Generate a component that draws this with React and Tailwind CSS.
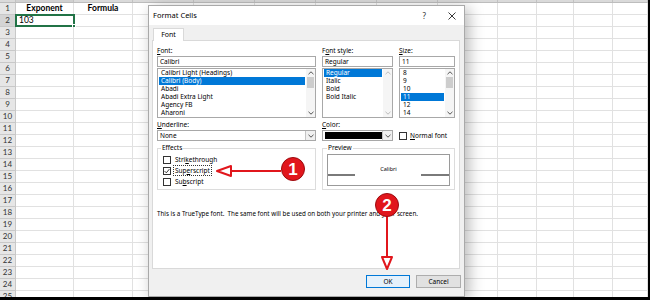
import React from 'react';

const rows = Array.from({ length: 25 }, (_, i) => i + 1);
const cols = 12;

const Chevron = ({ dir = 'down', color = '#555' }) => (
  <svg width="6" height="4" viewBox="0 0 6 4">
    <path
      d={dir === 'down' ? 'M0.5 0.8 L3 3.2 L5.5 0.8' : 'M0.5 3.2 L3 0.8 L5.5 3.2'}
      fill="none"
      stroke={color}
      strokeWidth="1"
    />
  </svg>
);

const Label = ({ pre, key1, post }) => (
  <div className="h-[11px] leading-[11px]">
    {pre}
    <span className="underline">{key1}</span>
    {post}
  </div>
);

const ListBox = ({ items, selected, width, thumb = true }) => (
  <div className={`mt-[1px] h-[50px] border border-[#a8a8a8] bg-white flex ${width}`}>
    <div className="flex-1 flex flex-col pl-[1px] pr-[1px] overflow-hidden">
      {items.map((it) => (
        <div
          key={it}
          className={`h-[8px] leading-[8px] pl-[2px] whitespace-nowrap ${
            it === selected ? 'bg-[#0078d7] text-white' : ''
          }`}
        >
          {it}
        </div>
      ))}
    </div>
    <div className="w-[9px] flex flex-col items-center bg-[#f5f5f5]">
      <div className="h-[8px] flex items-center">
        <Chevron dir="up" color={thumb ? '#555' : '#bbb'} />
      </div>
      {thumb && <div className="w-[7px] h-[11px] bg-[#cdcdcd]" />}
      <div className="mt-auto h-[8px] flex items-center">
        <Chevron color={thumb ? '#555' : '#bbb'} />
      </div>
    </div>
  </div>
);

const Select = ({ children }) => (
  <div className="h-[11px] border border-[#a8a8a8] bg-white flex">
    <div className="flex-1 flex items-center pl-[2px] overflow-hidden">{children}</div>
    <div className="w-[10px] border-l border-[#c4c4c4] flex items-center justify-center bg-[#f0f0f0]">
      <Chevron />
    </div>
  </div>
);

const Check = ({ checked, label, focus }) => (
  <div className="h-[11px] flex items-center pl-[5px]">
    <div className="w-[8px] h-[8px] border border-[#333] bg-white flex items-center justify-center">
      {checked && (
        <svg width="6" height="6" viewBox="0 0 6 6">
          <path d="M0.6 3.1 L2.3 4.8 L5.4 1.1" fill="none" stroke="#222" strokeWidth="0.9" />
        </svg>
      )}
    </div>
    <div className={`ml-[2px] px-[1px] leading-[9px] ${focus ? 'border border-dotted border-[#333]' : 'border border-transparent'}`}>
      {label}
    </div>
  </div>
);

const Sheet = () => (
  <div className="w-[648px] h-[297px] bg-white overflow-hidden flex flex-col font-['Lato',sans-serif]">
    <div className="grid grid-cols-[16px_58px_59px_61px_61px_61px_61px_61px_60px_39px_37px_39px_35px] h-[3px] shrink-0 bg-[#dadada] border-b border-[#bdbdbd]">
      <div className="border-r border-[#c2c2c2]" />
      <div className="border-r border-[#c2c2c2] bg-[#d0d0d0]" />
      {Array.from({ length: cols - 1 }, (_, i) => (
        <div key={i} className="border-r border-[#c2c2c2]" />
      ))}
    </div>
    {rows.map((r) => (
      <div
        key={r}
        className="grid grid-cols-[16px_58px_59px_61px_61px_61px_61px_61px_60px_39px_37px_39px_35px] h-[12px] shrink-0"
      >
        <div
          className={`border-r border-b border-[#c8c8c8] text-center text-[8px] leading-[11px] text-[#333] ${
            r === 2 ? 'bg-[#d4d4d4] text-[#1e6b3f]' : 'bg-[#e6e6e6]'
          }`}
        >
          {r}
        </div>
        <div className="border-r border-b border-[#e1e1e1] text-[8.5px] leading-[11px] text-black relative">
          {r === 1 && <div className="text-center font-bold">Exponent</div>}
          {r === 2 && (
            <div className="absolute -left-[1px] -top-[1px] w-[60px] h-[13px] border-2 border-[#217346] pl-[2px] leading-[9px]">
              103
              <div className="absolute -right-[3px] -bottom-[3px] w-[4px] h-[4px] bg-[#217346] border border-white" />
            </div>
          )}
        </div>
        <div className="border-r border-b border-[#e1e1e1] text-[8.5px] leading-[11px] text-black">
          {r === 1 && <div className="text-center font-bold">Formula</div>}
        </div>
        {Array.from({ length: cols - 2 }, (_, i) => (
          <div key={i} className="border-r border-b border-[#e1e1e1]" />
        ))}
      </div>
    ))}
  </div>
);

const Dialog = () => (
  <div className="absolute left-[148px] top-[5px] w-[317px] h-[292px] bg-[#f0f0f0] border border-[#a9a9a9] shadow-[4px_3px_14px_rgba(0,0,0,0.28)] flex flex-col font-['Noto_Sans',sans-serif] text-[6.5px] text-black">
    {/* Title bar */}
    <div className="h-[19px] bg-white flex items-center pl-[4px] pr-[8px] shrink-0">
      <span className="text-[7.5px]">Format Cells</span>
      <span className="ml-auto text-[8px] text-[#333]">?</span>
      <svg className="ml-[22px]" width="8" height="8" viewBox="0 0 8 8">
        <path d="M0.5 0.5 L7.5 7.5 M7.5 0.5 L0.5 7.5" stroke="#222" strokeWidth="0.9" />
      </svg>
    </div>

    <div className="flex-1 px-[3px] pt-[3px] flex flex-col">
      {/* Tabs */}
      <div className="flex h-[12px] pl-[1px]">
        <div className="w-[31px] bg-white border border-b-0 border-[#d9d9d9] relative z-10 -mb-px flex items-center justify-center text-[7px]">
          Font
        </div>
      </div>

      {/* Panel */}
      <div className="w-[308px] h-[229px] bg-white border border-[#d9d9d9] pl-[4px] pt-[4px] flex flex-col">
        <div className="flex gap-[6px]">
          <div className="w-[159px] flex flex-col">
            <Label key1="F" post="ont:" />
            <div className="h-[11px] border border-[#a8a8a8] pl-[2px] leading-[9px]">Calibri</div>
            <ListBox
              width="w-[159px]"
              selected="Calibri (Body)"
              items={['Calibri Light (Headings)', 'Calibri (Body)', 'Abadi', 'Abadi Extra Light', 'Agency FB', 'Aharoni']}
            />
            <div className="mt-[1px]">
              <Label key1="U" post="nderline:" />
            </div>
            <Select>None</Select>
          </div>

          <div className="w-[71px] flex flex-col">
            <Label pre="F" key1="o" post="nt style:" />
            <div className="h-[11px] border border-[#a8a8a8] pl-[2px] leading-[9px]">Regular</div>
            <ListBox
              width="w-[71px]"
              selected="Regular"
              thumb={false}
              items={['Regular', 'Italic', 'Bold', 'Bold Italic']}
            />
            <div className="mt-[1px]">
              <Label key1="C" post="olor:" />
            </div>
            <Select>
              <div className="w-[57px] h-[7px] bg-black" />
            </Select>
          </div>

          <div className="w-[56px] flex flex-col">
            <Label key1="S" post="ize:" />
            <div className="h-[11px] border border-[#a8a8a8] pl-[2px] leading-[9px]">11</div>
            <ListBox width="w-[56px]" selected="11" items={['8', '9', '10', '11', '12', '14']} />
            <div className="mt-[1px] h-[11px]" />
            <div className="h-[11px] flex items-center">
              <div className="w-[8px] h-[8px] border border-[#333] bg-white" />
              <span className="ml-[3px]">
                <span className="underline">N</span>ormal font
              </span>
            </div>
          </div>
        </div>

        {/* Effects + Preview */}
        <div className="flex gap-[6px] mt-[3px]">
          <fieldset className="w-[159px] h-[46px] border border-[#dcdcdc] px-0">
            <legend className="ml-[3px] px-[1px] leading-[8px]">Effects</legend>
            <div className="mt-[2px]">
              <Check label={<span>Stri<span className="underline">k</span>ethrough</span>} />
              <Check checked focus label={<span>Sup<span className="underline">e</span>rscript</span>} />
              <Check label={<span>Su<span className="underline">b</span>script</span>} />
            </div>
          </fieldset>

          <fieldset className="w-[133px] h-[46px] border border-[#dcdcdc] px-[4px]">
            <legend className="ml-[0px] px-[1px] leading-[8px]">Preview</legend>
            <div className="mt-[2px] h-[32px] border border-[#9a9a9a] flex flex-col">
              <div className="h-[19px] flex items-end justify-center text-[5.5px] leading-[8px] pb-[1px]">
                Calibri
              </div>
              <div className="flex">
                <div className="w-[27px] h-[1.5px] bg-[#7a7a7a]" />
                <div className="flex-1" />
                <div className="w-[28px] h-[1.5px] bg-[#7a7a7a]" />
              </div>
            </div>
          </fieldset>
        </div>

        <div className="mt-[19px] leading-[10px] whitespace-nowrap text-[6.25px]">
          This is a TrueType font.&nbsp; The same font will be used on both your printer and your screen.
        </div>
      </div>

      {/* Buttons */}
      <div className="flex justify-end gap-[6px] mt-[6px]">
        <div className="w-[44px] h-[13px] border border-[#0078d7] bg-[#e5f1fb] flex items-center justify-center text-[6.5px]">
          OK
        </div>
        <div className="w-[45px] h-[13px] border border-[#adadad] bg-[#e1e1e1] flex items-center justify-center text-[6.5px]">
          Cancel
        </div>
      </div>
    </div>
  </div>
);

const Badge = ({ n, className }) => (
  <div
    className={`absolute w-[24px] h-[24px] rounded-full bg-[#e1161c] border border-[#9b0b0f] flex items-center justify-center text-white font-bold text-[17px] leading-none font-['Liberation_Sans',sans-serif] ${className}`}
  >
    {n}
  </div>
);

export default function App() {
  return (
    <div className="w-[650px] h-[300px] bg-black relative overflow-hidden">
      <Sheet />
      <Dialog />

      <svg className="absolute inset-0 pointer-events-none" width="650" height="300" viewBox="0 0 650 300">
        <line x1="281" y1="171" x2="230" y2="171" stroke="#e1161c" strokeWidth="2" />
        <polygon points="217,171 231,166 231,176" fill="#fff" stroke="#e1161c" strokeWidth="2" strokeLinejoin="round" />
        <line x1="387" y1="216" x2="387" y2="257" stroke="#e1161c" strokeWidth="2" />
        <polygon points="387,269 382,257 392,257" fill="#fff" stroke="#e1161c" strokeWidth="2" strokeLinejoin="round" />
      </svg>

      <Badge n="1" className="left-[281px] top-[157px]" />
      <Badge n="2" className="left-[375px] top-[193px]" />
    </div>
  );
}
